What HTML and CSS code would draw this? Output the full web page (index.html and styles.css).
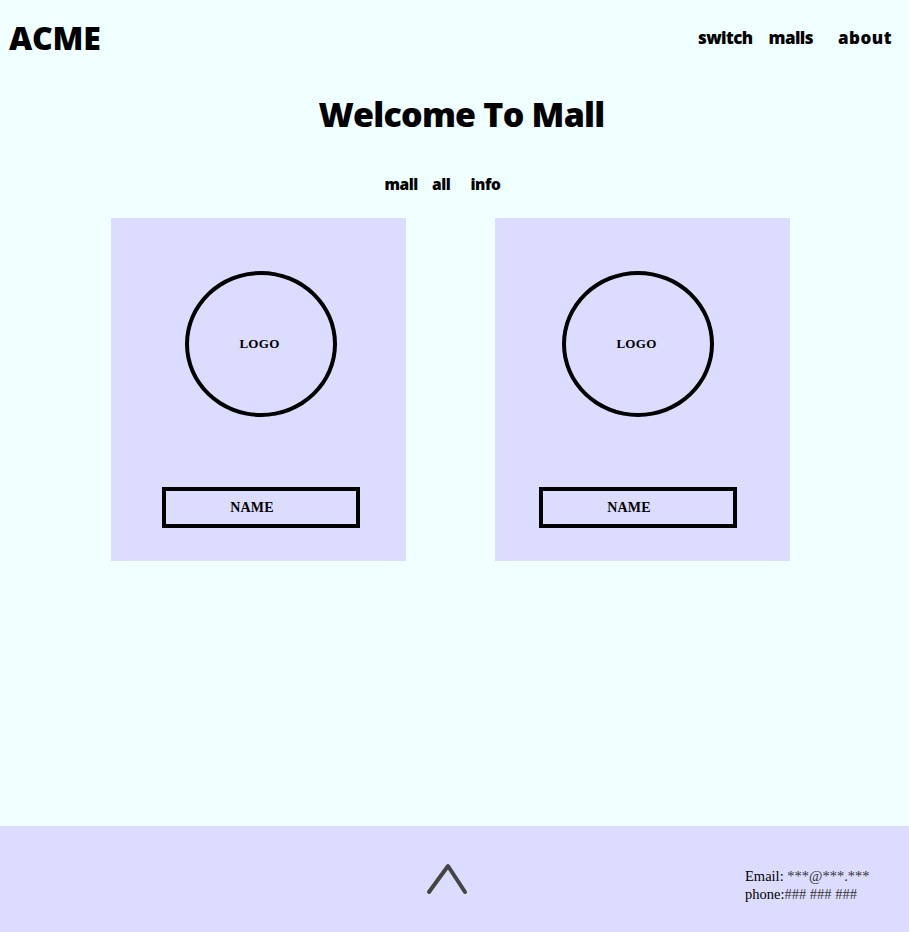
FILE: index.html
```html
<!DOCTYPE html>
<html>
<head>
<meta charset="utf-8">
<link rel="stylesheet" href="styles.css">
</head>
<body>
<div class="page">
  <header class="topbar">
    <div class="brand">ACME</div>
    <nav class="mainnav">
      <a class="nav-switch">switch</a>
      <a class="nav-malls">malls</a>
      <a class="nav-about">about</a>
    </nav>
  </header>
  <main class="content">
    <h1 class="title">Welcome To Mall</h1>
    <nav class="tabs">
      <a>mall</a>
      <a>all</a>
      <a>info</a>
    </nav>
    <section class="cards">
      <div class="card">
        <div class="logo">LOGO</div>
        <div class="name">NAME</div>
      </div>
      <div class="card card-alt">
        <div class="logo">LOGO</div>
        <div class="name">NAME</div>
      </div>
    </section>
  </main>
  <footer class="footer">
    <div class="up">
      <svg width="44" height="34" viewBox="0 0 44 34"><path d="M4 29 L23 3 L40 29" fill="none" stroke="#444" stroke-width="4" stroke-linecap="round" stroke-linejoin="round"/></svg>
    </div>
    <div class="contact">
      <div>Email: <span class="muted">***@***.***</span></div>
      <div>phone:<span class="muted">### ### ###</span></div>
    </div>
  </footer>
</div>
</body>
</html>
```

FILE: styles.css
```css
html, body {
  margin: 0;
  padding: 0;
  background: #f0ffff;
}
.page {
  min-height: 932px;
  display: flex;
  flex-direction: column;
  font-family: "Open Sans", "Noto Sans", sans-serif;
  color: #000;
}
.topbar {
  display: flex;
  justify-content: space-between;
  align-items: center;
  height: 76px;
  padding: 0 17px 0 9px;
}
.brand {
  font-weight: 800;
  font-size: 32px;
  letter-spacing: -0.2px;
  margin-top: -2px;
}
.mainnav {
  display: flex;
  align-items: center;
  margin-top: -2px;
}
.mainnav a {
  font-weight: 800;
  font-size: 17px;
  letter-spacing: -0.6px;
}
.nav-malls { margin-left: 16px; }
.nav-about { margin-left: 25px; }
.mainnav .nav-about { letter-spacing: 0.5px; }
.content {
  flex: 1;
  display: flex;
  flex-direction: column;
  align-items: center;
}
.title {
  margin: 14px 0 0;
  font-size: 34px;
  font-weight: 800;
  letter-spacing: -0.8px;
  line-height: 48px;
  padding-left: 14px;
}
.tabs {
  display: flex;
  margin-top: 37px;
  margin-right: 24px;
  height: 43px;
  align-items: flex-start;
}
.tabs a {
  font-weight: 800;
  font-size: 15.5px;
  letter-spacing: -0.4px;
  line-height: 18px;
}
.tabs a + a { margin-left: 14px; }
.tabs a:last-child { margin-left: 20px; }
.cards {
  display: flex;
  gap: 89px;
  margin-right: 8px;
}
.card {
  width: 295px;
  height: 343px;
  background: #dcdcff;
  display: flex;
  flex-direction: column;
  align-items: center;
  font-family: "Liberation Serif", serif;
  font-weight: 700;
  font-size: 13px;
}
.logo {
  box-sizing: border-box;
  width: 152px;
  height: 146px;
  border: 4px solid #000;
  border-radius: 50%;
  margin-top: 53px;
  margin-left: 4px;
  display: flex;
  align-items: center;
  justify-content: center;
  letter-spacing: 0.3px;
  padding-right: 2px;
}
.name {
  box-sizing: border-box;
  width: 198px;
  height: 41px;
  border: 4px solid #000;
  margin-top: 70px;
  margin-left: 5px;
  display: flex;
  align-items: center;
  justify-content: center;
  padding-right: 18px;
  font-size: 14px;
  letter-spacing: 0.2px;
}
.card-alt .logo { margin-left: -10px; }
.card-alt .name { margin-left: -9px; }
.footer {
  height: 106px;
  background: #dcdcff;
  display: flex;
  align-items: center;
}
.up {
  margin-left: 425px;
  margin-top: 1px;
  height: 34px;
}
.contact {
  margin-left: 276px;
  margin-top: 12px;
  font-family: "Liberation Serif", serif;
  font-size: 14.5px;
  line-height: 18px;
  color: #000;
}
.muted { color: #333; }
```
